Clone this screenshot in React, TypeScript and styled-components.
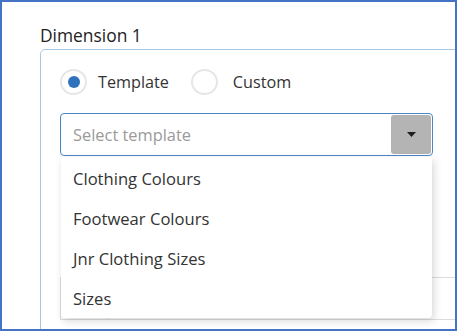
import * as React from 'react';
import styled, { createGlobalStyle } from 'styled-components';

const GlobalStyle = createGlobalStyle`
  html, body {
    margin: 0;
    padding: 0;
    background: #ffffff;
  }
  body {
    font-family: 'Open Sans', 'Noto Sans', Arial, sans-serif;
  }
`;

const Frame = styled.div`
  box-sizing: border-box;
  width: 457px;
  height: 331px;
  border: 2px solid #4472c4;
  overflow: hidden;
  padding: 21px 0 0 38px;
  background: #ffffff;
`;

const Title = styled.div`
  color: #222222;
  font-size: 17.4px;
  line-height: 24px;
  height: 26px;
`;

const Panel = styled.div`
  box-sizing: border-box;
  width: 460px;
  height: 320px;
  border: 1px solid #a9c8e8;
  border-radius: 5px;
  padding: 18px 0 0 19px;
`;

const RadioRow = styled.div`
  display: flex;
  align-items: center;
  height: 27px;
`;

const RadioOption = styled.label<{ gap?: number }>`
  display: flex;
  align-items: center;
  gap: ${p => p.gap ?? 11}px;
  margin-right: 22px;
  color: #333333;
  font-size: 16.2px;
`;

const RadioCircle = styled.span<{ checked?: boolean }>`
  box-sizing: border-box;
  width: 27px;
  height: 26px;
  border-radius: 50%;
  border: 2px solid #e6e6e6;
  display: flex;
  align-items: center;
  justify-content: center;

  &::after {
    content: '';
    width: 12px;
    height: 12px;
    border-radius: 50%;
    background: ${p => (p.checked ? '#2f73bf' : 'transparent')};
  }
`;

const SelectWrap = styled.div`
  position: relative;
  margin-top: 18px;
  width: 373px;
`;

const SelectBox = styled.div`
  box-sizing: border-box;
  height: 43px;
  border: 1.5px solid #4a87c9;
  border-radius: 4px;
  display: flex;
  align-items: center;
  justify-content: space-between;
  padding: 0 1px 0 12px;
`;

const Placeholder = styled.span`
  color: #9a9a9a;
  font-size: 16.4px;
`;

const CaretButton = styled.span`
  width: 40px;
  height: 39px;
  border-radius: 3px;
  background: #b4b4b4;
  display: flex;
  align-items: center;
  justify-content: center;
`;

const Menu = styled.ul`
  position: absolute;
  top: 44px;
  left: 1px;
  width: 371px;
  margin: 0;
  padding: 1px 0 0;
  list-style: none;
  background: #ffffff;
  border-radius: 0 0 4px 4px;
  box-shadow: 2px 3px 8px rgba(0, 0, 0, 0.16);
  z-index: 2;
`;

const MenuItem = styled.li`
  height: 40px;
  display: flex;
  align-items: center;
  padding-left: 12px;
  color: #333333;
  font-size: 16.6px;
`;

const ValuesTable = styled.div`
  box-sizing: border-box;
  margin-top: 121px;
  width: 420px;
  height: 43px;
  border: 1px solid #dcdcdc;
  border-right: none;
  display: grid;
  grid-template-columns: 47px 1fr;
`;

const ValuesCell = styled.div`
  border-right: 1px solid #dcdcdc;
`;

const templates = ['Clothing Colours', 'Footwear Colours', 'Jnr Clothing Sizes', 'Sizes'];

const App = () => {
  return (
    <>
      <GlobalStyle />
      <Frame>
        <Title>Dimension 1</Title>
        <Panel>
          <RadioRow>
            <RadioOption>
              <RadioCircle checked />
              Template
            </RadioOption>
            <RadioOption gap={15}>
              <RadioCircle />
              Custom
            </RadioOption>
          </RadioRow>
          <SelectWrap>
            <SelectBox>
              <Placeholder>Select template</Placeholder>
              <CaretButton>
                <svg width="9" height="5" viewBox="0 0 9 5">
                  <path d="M0 0 L9 0 L4.5 5 Z" fill="#1f1f1f" />
                </svg>
              </CaretButton>
            </SelectBox>
            <Menu>
              {templates.map(t => (
                <MenuItem key={t}>{t}</MenuItem>
              ))}
            </Menu>
          </SelectWrap>
          <ValuesTable>
            <ValuesCell />
            <div />
          </ValuesTable>
        </Panel>
      </Frame>
    </>
  );
};

export default App;
